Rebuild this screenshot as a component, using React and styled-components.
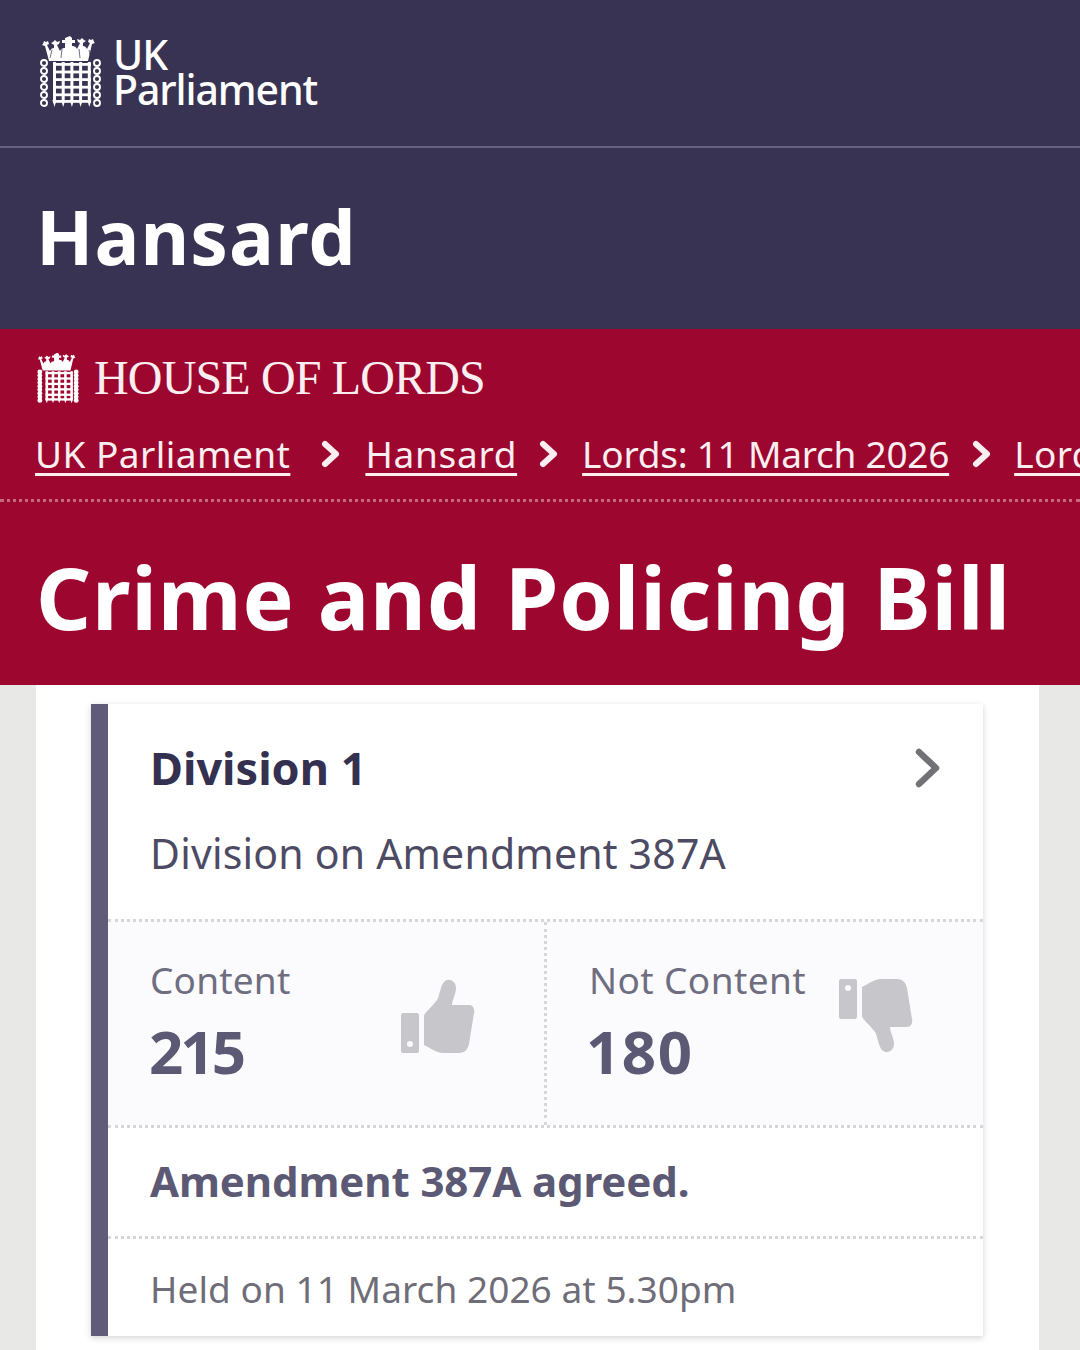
import React from "react";
import styled, { createGlobalStyle } from "styled-components";

const Global = createGlobalStyle`
  html, body { margin: 0; padding: 0; background: #e8e8e6; }
  body { font-family: "Noto Sans", "Open Sans", sans-serif; overflow: hidden; }
  #root { height: 1350px; overflow: hidden; }
`;
const Page = styled.div`width: 1080px; height: 1350px; overflow: hidden; display: flex; flex-direction: column;`;
const Masthead = styled.header`background: #383352; color: #fff;`;
const BrandBar = styled.div`box-sizing: border-box; border-bottom: 2px solid #66637f; padding: 35px 0 0 40px; display: flex; gap: 13px; height: 148px;`;
const BrandText = styled.div`font-size: 41px; line-height: 35px; letter-spacing: -1.1px; font-weight: 500; font-family: "Noto Sans", sans-serif; margin: 2px 0 0 -1px;`;
const HansardBar = styled.div`height: 181px; box-sizing: border-box; padding: 38px 0 0 36px;`;
const HansardTitle = styled.div`font-size: 75px; line-height: 100px; font-weight: 700; letter-spacing: 1.1px;`;
const Lords = styled.section`background: #9d062e; color: #fff; height: 356px; box-sizing: border-box; padding-top: 24px;`;
const LordsBrand = styled.div`display: flex; align-items: center; gap: 14px; padding-left: 36px; height: 50px;`;
const LordsName = styled.div`font-family: "Liberation Serif", serif; font-size: 48px; letter-spacing: -0.85px; line-height: 50px; color: #fbeef1;`;
const Crumbs = styled.nav`display: flex; align-items: center; white-space: nowrap; overflow: hidden; padding: 27px 0 21px 35px; height: 48px; border-bottom: 3px dotted #c46a80; box-sizing: content-box; font-size: 37px; line-height: 48px;`;
const Crumb = styled.a`color: #fbeef1; text-decoration: underline; text-decoration-thickness: 3px; text-underline-offset: 5px; flex: none; letter-spacing: ${p => p.$spacing || 0}px;`;
const Sep = styled.svg`flex: none; width: 20px; height: 32px; margin: 0 ${p => p.$right}px 0 ${p => p.$left}px;`;
const BillTitle = styled.h1`margin: 0; padding: 40px 0 0 36px; font-size: 86px; line-height: 110px; font-weight: 700; letter-spacing: 0.8px; white-space: nowrap;`;
const Body = styled.main`flex: 1; margin: 0 41px 0 36px; background: #fff; padding: 19px 56px 0 55px;`;
const Card = styled.article`background: #fff; border-left: 17px solid #5f5b78; box-shadow: 0 2px 6px rgba(60,60,70,.22);`;
const Head = styled.div`height: 215px; box-sizing: border-box; padding: 32px 42px 0 42px;`;
const TitleRow = styled.div`display: flex; justify-content: space-between; align-items: center; height: 64px;`;
const Title = styled.h2`margin: 0; font-size: 45px; line-height: 64px; font-weight: 700; color: #34304f;`;
const Desc = styled.p`margin: 23px 0 0; font-size: 41px; line-height: 60px; color: #4d4a63; letter-spacing: 0.2px;`;
const Stats = styled.div`display: grid; grid-template-columns: 439px 1fr; background: #fbfbfd; border-top: 3px dotted #d6d6d9; height: 206px; box-sizing: border-box;`;
const Stat = styled.div`display: flex; justify-content: space-between; padding: 31px ${p => p.$right}px 0 ${p => p.$left}px; ${p => p.$divided && "border-right: 3px dotted #d6d6d9;"}`;
const StatLabel = styled.div`font-size: 37px; line-height: 54px; color: #6f6d80; letter-spacing: ${p => p.$spacing}px;`;
const StatValue = styled.div`font-size: 60px; line-height: 88px; font-weight: 700; color: #5c5975; letter-spacing: ${p => p.$spacing}px; margin-left: ${p => p.$shift}px;`;
const ThumbIcon = styled.svg`width: 76px; height: 76px; margin-top: 25px; flex: none; ${p => p.$down && "transform: scaleY(-1);"}`;
const Outcome = styled.div`border-top: 3px dotted #d6d6d9; height: 111px; box-sizing: border-box; padding: 23px 0 0 42px; font-size: 42px; line-height: 60px; font-weight: 700; color: #5c5975; letter-spacing: -0.1px;`;
const Held = styled.div`border-top: 3px dotted #d6d6d9; height: 100px; box-sizing: border-box; padding: 20px 0 0 42px; font-size: 37px; line-height: 60px; color: #6f6d78; letter-spacing: 0.05px;`;

const crown = "M30 -2l2 2v2h3v3h-3v3c3 0 4 1 5 3l3-6-2-1-1-3 3 1 2-2 2 2 2 1-3 2 0 3c2 0 3 1 4 3l3-6-2-1 1-3 2 1 2-1 1 3 1 1-3 1-4 17H9L5 8 2 7l1-1 1-3 2 1 2-1 1 3-2 1 3 6c1-2 2-3 4-3v-3l-3-2 2-1 2-2 2 2 3-1-1 3-2 1 3 6c1-2 2-3 5-3V5h-3V2h3V0z";

function Portcullis({ width, height, variant }) {
  const heavy = variant === "heavy";
  const barW = heavy ? 3.6 : 3;
  const xs = [13, 21.7, 30.4, 39.1, 47.8];
  const ys = [25, 32.6, 40.2, 47.8, 55.4, 62];
  const links = [25, 33, 41, 49, 57, 65];
  return (
    <svg width={width} height={height} viewBox="0 -3 61 73" style={{ flex: "none" }} aria-hidden="true">
      <path fill="#fff" d={crown} />
      <path fill="none" stroke="#383352" strokeWidth="1" d="M12 12l-2 8M22 11l-1 9M39 11l1 9M49 12l2 8" opacity={heavy ? 0 : 0.7} />
      {heavy
        ? <g fill="#fff">{[25,30,35,40,45,50,55,60,65].map(y => (
            <g key={y}><circle cx="5" cy={y} r="3.4" /><circle cx="56" cy={y} r="3.4" /></g>
          ))}</g>
        : <g fill="none" stroke="#fff" strokeWidth="1.9">{links.map(y => (
            <g key={y}><circle cx="4" cy={y} r="3" /><circle cx="57" cy={y} r="3" /></g>
          ))}</g>}
      <g fill="#fff">
        {xs.map(x => <rect key={x} x={x} y="24" width={barW} height="39" />)}
        {xs.map(x => <path key={"p" + x} d={`M${x - 0.6} 62h${barW + 1.2}l-${(barW + 1.2) / 2} 7z`} />)}
        {ys.map(y => <rect key={y} x="13" y={y} width="38" height={heavy ? 3.2 : 2.8} />)}
      </g>
    </svg>
  );
}
const Chevron = ({ left, right }) => (
  <Sep $left={left} $right={right} viewBox="0 0 20 32" aria-hidden="true"><path d="M4 6l11 10L4 26" fill="none" stroke="#fbeef1" strokeWidth="6" strokeLinecap="round" strokeLinejoin="round"/></Sep>
);
const Thumb = ({ down }) => (
  <ThumbIcon $down={down} viewBox="0 0 76 76" aria-hidden="true">
    <path fillRule="evenodd" fill="#c7c6cb" d="M3 35h14a2 2 0 0 1 2 2v36a2 2 0 0 1-2 2H3a2 2 0 0 1-2-2V37a2 2 0 0 1 2-2zm7 28a3 3 0 1 0 0 6 3 3 0 0 0 0-6z"/>
    <path fill="#c7c6cb" d="M24 38c0-3 9-10 13-16 3-5 3-15 8-19 4-3 11 0 11 7 0 6-4 12-4 17h17c4 0 6 4 5 8l-5 31c-1 5-4 9-10 9H43c-7 0-14-6-19-8z"/>
  </ThumbIcon>
);

export default function App() {
  return (
    <Page>
      <Global />
      <Masthead>
        <BrandBar>
          <Portcullis width={61} height={73} />
          <BrandText>UK<br />Parliament</BrandText>
        </BrandBar>
        <HansardBar><HansardTitle>Hansard</HansardTitle></HansardBar>
      </Masthead>
      <Lords>
        <LordsBrand>
          <Portcullis width={44} height={52} variant="heavy" />
          <LordsName>HOUSE OF LORDS</LordsName>
        </LordsBrand>
        <Crumbs>
          <Crumb $spacing={0.45}>UK Parliament</Crumb>
          <Chevron left={31} right={24} />
          <Crumb $spacing={0.7}>Hansard</Crumb>
          <Chevron left={22} right={23} />
          <Crumb $spacing={-0.25}>Lords: 11 March 2026</Crumb>
          <Chevron left={23} right={22} />
          <Crumb $spacing={0.45}>Lords Chamber</Crumb>
        </Crumbs>
        <BillTitle>Crime and Policing Bill</BillTitle>
      </Lords>
      <Body>
        <Card>
          <Head>
            <TitleRow>
              <Title>Division 1</Title>
              <svg width="26" height="40" viewBox="0 0 26 40" aria-hidden="true"><path d="M4 4l17 16L4 36" fill="none" stroke="#727176" strokeWidth="6.5" strokeLinecap="round" strokeLinejoin="round"/></svg>
            </TitleRow>
            <Desc>Division on Amendment 387A</Desc>
          </Head>
          <Stats>
            <Stat $divided $left={42} $right={68}>
              <div><StatLabel $spacing={0.2}>Content</StatLabel><StatValue $spacing={-3} $shift={-1}>215</StatValue></div>
              <Thumb />
            </Stat>
            <Stat $left={42} $right={69}>
              <div><StatLabel $spacing={0.4}>Not Content</StatLabel><StatValue $spacing={1.5} $shift={-3}>180</StatValue></div>
              <Thumb down />
            </Stat>
          </Stats>
          <Outcome>Amendment 387A agreed.</Outcome>
          <Held>Held on 11 March 2026 at 5.30pm</Held>
        </Card>
      </Body>
    </Page>
  );
}
